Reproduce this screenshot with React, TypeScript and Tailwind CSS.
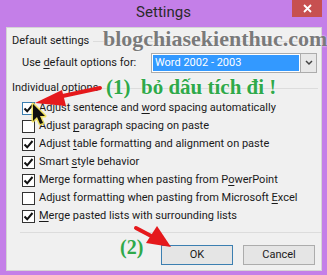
import React from "react";

const ui = { fontFamily: 'Roboto, "Noto Sans", sans-serif' };
const serif = { fontFamily: '"Liberation Serif", "DejaVu Serif", serif' };

function Check({ checked, hover }: { checked: boolean; hover?: boolean }) {
  return (
    <div
      className={
        "w-[13px] h-[13px] bg-white border flex items-center justify-center shrink-0 " +
        (hover ? "border-[#3c7fb1]" : "border-[#333333]")
      }
    >
      {checked && (
        <svg width="11" height="11" viewBox="0 0 11 11">
          <path d="M1.5 5.5 L4.2 8.3 L9.5 2" fill="none" stroke="#111" strokeWidth="2" />
        </svg>
      )}
    </div>
  );
}

function Row({ checked, hover, children }: { checked: boolean; hover?: boolean; children: React.ReactNode }) {
  return (
    <div className="h-[18px] flex items-center gap-[4px] pl-[15px]">
      <Check checked={checked} hover={hover} />
      <span className="text-[11px] leading-[16px] text-[#1a1a1a] whitespace-nowrap">{children}</span>
    </div>
  );
}

const U = ({ children }: { children: React.ReactNode }) => <span className="underline underline-offset-2">{children}</span>;

export default function App() {
  return (
    <div className="w-[327px] h-[275px] bg-[#c47fe8] relative overflow-hidden flex flex-col" style={ui}>
      <div className="h-[27px] relative flex items-center justify-center">
        <span className="text-[15px] text-[#2a2a2a] leading-none mt-[-2px]">Settings</span>
        <div className="absolute right-[5px] top-0 w-[30px] h-[17px] bg-[#c75050] flex items-center justify-center">
          <svg width="9" height="9" viewBox="0 0 9 9">
            <path d="M1 1 L8 8 M8 1 L1 8" stroke="white" strokeWidth="1.8" />
          </svg>
        </div>
      </div>
      <div className="ml-[6px] mr-[5px] h-[244px] bg-[#f0f0f0] border border-[#d4d4d4] flex flex-col">
        <div className="h-[16px] mt-[5px] flex items-center pl-[5px] pr-[3px] gap-[4px]">
          <span className="text-[11px] text-[#1a1a1a] whitespace-nowrap">Default settings</span>
          <div className="flex-1 h-px bg-[#dcdcdc]" />
        </div>
        <div className="h-[20px] mt-[4px] flex items-center pl-[15px]">
          <span className="text-[11px] text-[#1a1a1a] whitespace-nowrap w-[129px]">
            Use <U>d</U>efault options for:
          </span>
          <div className="w-[166px] h-[20px] border border-[#acacac] bg-white flex items-stretch">
            <div className="flex-1 m-[1px] bg-[#3399ff] text-white text-[11px] leading-[16px] pl-[2px]">Word 2002 - 2003</div>
            <div className="w-[16px] bg-[#e8e8e8] border-l border-[#acacac] flex items-center justify-center">
              <svg width="8" height="6" viewBox="0 0 8 6">
                <path d="M1 1 L4 4 L7 1" fill="none" stroke="#444" strokeWidth="1.5" />
              </svg>
            </div>
          </div>
        </div>
        <div className="h-[16px] mt-[7px] flex items-center pl-[5px] pr-[3px] gap-[4px]">
          <span className="text-[11px] text-[#1a1a1a] whitespace-nowrap">Individual options</span>
          <div className="flex-1 h-px bg-[#dcdcdc]" />
        </div>
        <div className="mt-[3px] flex flex-col">
          <Row checked hover>Adjust sentence and <U>w</U>ord spacing automatically</Row>
          <Row checked={false}>Adjust <U>p</U>aragraph spacing on paste</Row>
          <Row checked>Adjust <U>t</U>able formatting and alignment on paste</Row>
          <Row checked>Smart <U>s</U>tyle behavior</Row>
          <Row checked>Merge formatting when pasting from P<U>o</U>werPoint</Row>
          <Row checked={false}>Adjust formatting when pasting from Microsoft <U>E</U>xcel</Row>
          <Row checked><U>M</U>erge pasted lists with surrounding lists</Row>
        </div>
        <div className="mt-[7px] ml-[13px] h-px bg-[#dcdcdc]" />
        <div className="mt-[12px] flex justify-end gap-[10px] pr-[6px]">
          <div className="w-[72px] h-[20px] border border-[#3c7fb1] bg-[#e5e5e5] flex items-center justify-center text-[11px] text-[#1a1a1a]">OK</div>
          <div className="w-[72px] h-[20px] border border-[#acacac] bg-[#e5e5e5] flex items-center justify-center text-[11px] text-[#1a1a1a]">Cancel</div>
        </div>
      </div>

      {/* overlays */}
      <div className="absolute left-[103px] top-[28px] text-[22px] font-bold text-[#7a7a7a] leading-none whitespace-nowrap" style={{ ...serif, textShadow: "0 0 2px #fff" }}>
        blogchiasekienthuc.com
      </div>
      <div className="absolute left-[106px] top-[77px] text-[21px] font-bold text-[#2fa94a] leading-none whitespace-nowrap" style={{ ...serif, textShadow: "0 0 2px #fff" }}>
        (1)&nbsp;&nbsp;bỏ dấu tích đi !
      </div>
      <div className="absolute left-[120px] top-[237px] text-[20px] font-bold text-[#2fa94a] leading-none whitespace-nowrap" style={serif}>
        (2)
      </div>
      <svg className="absolute left-0 top-0" width="327" height="275" viewBox="0 0 327 275">
        <path d="M100 88 L58 97" stroke="#e5191c" strokeWidth="4" strokeLinecap="round" />
        <path d="M35 103 L62 90 L66 106 Z" fill="#e5191c" />
        <path d="M136 228 L155 238" stroke="#e5191c" strokeWidth="4" strokeLinecap="round" />
        <path d="M171 247 L146 243 L157 226 Z" fill="#e5191c" />
        <g>
          <path d="M33 104 L33 121 L37 117 L40 124 L43 123 L40 116 L45 116 Z" fill="#111" stroke="#f2e04a" strokeWidth="3" strokeLinejoin="round" opacity="0.85" />
          <path d="M33 104 L33 121 L37 117 L40 124 L43 123 L40 116 L45 116 Z" fill="#111" />
        </g>
      </svg>
    </div>
  );
}
